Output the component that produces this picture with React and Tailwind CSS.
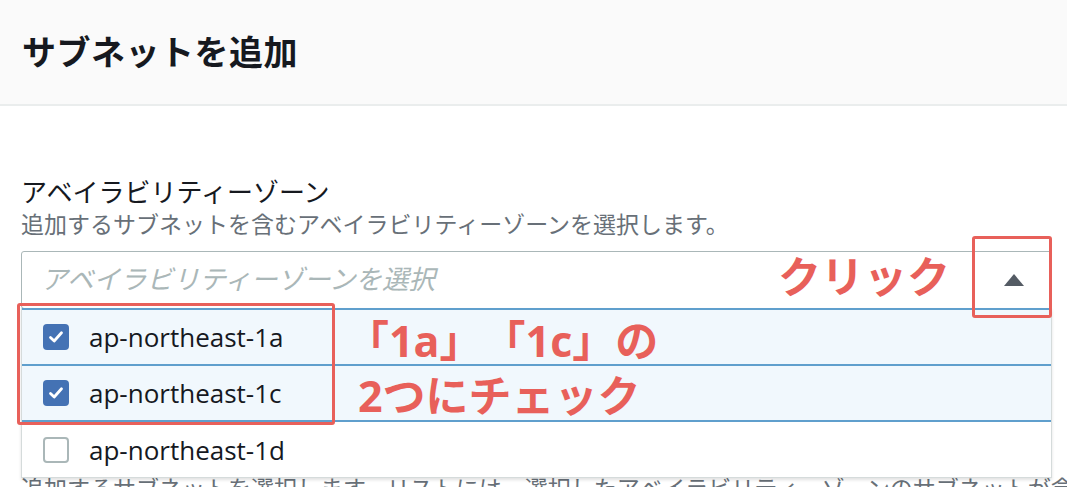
import React from "react";

const zones = [
  { name: "ap-northeast-1a", checked: true },
  { name: "ap-northeast-1c", checked: true },
  { name: "ap-northeast-1d", checked: false },
];

const font = {
  fontFamily: '"Open Sans", "Noto Sans CJK JP", sans-serif',
};

const CheckBox = ({ checked }) =>
  checked ? (
    <span className="flex h-[26px] w-[26px] items-center justify-center rounded-[4px] bg-[#4472b4]">
      <svg width="18" height="18" viewBox="0 0 18 18" fill="none">
        <path
          d="M3.5 9.5 L7.2 13 L14.5 4.8"
          stroke="#ffffff"
          strokeWidth="2.8"
          strokeLinecap="round"
          strokeLinejoin="round"
        />
      </svg>
    </span>
  ) : (
    <span className="h-[26px] w-[26px] rounded-[4px] border-2 border-[#aab7b8] bg-white" />
  );

const App = () => {
  return (
    <div
      className="relative h-[487px] w-[1067px] overflow-hidden bg-white text-[#16191f] [text-spacing-trim:space-all]"
      style={font}
    >
      <div className="flex h-[106px] items-center border-b-2 border-[#eaeded] bg-[#fafafa] pl-[22px]">
        <h1 className="text-[34px] font-bold leading-none tracking-[0.5px]">
          サブネットを追加
        </h1>
      </div>

      <div className="pl-[21px] pr-[15px] pt-[69px]">
        <div className="text-[26px] leading-[34px]">アベイラビリティーゾーン</div>
        <div className="text-[23px] leading-[30px] text-[#687078]">
          追加するサブネットを含むアベイラビリティーゾーンを選択します。
        </div>

        <div className="relative mt-[12px]">
          <div className="flex h-[58px] items-center justify-between rounded-[3px] border border-[#aab7b8] pl-[19px] pr-[26px]">
            <span className="text-[26.5px] italic text-[#aab7b8]">
              アベイラビリティーゾーンを選択
            </span>
            <svg width="22" height="14" viewBox="0 0 22 14">
              <path d="M11 1 L21 13 L1 13 Z" fill="#545b64" />
            </svg>
          </div>

          <ul className="absolute left-0 right-0 top-[57px] z-10 border-x border-b border-[#d5dbdb] bg-white shadow-[0_2px_3px_rgba(0,0,0,0.12)]">
            {zones.map((z) => (
              <li
                key={z.name}
                className={
                  z.checked
                    ? "-mt-[2px] flex h-[58px] items-center gap-[20px] border-y-2 border-[#5f9fcd] bg-[#f1f8fd] pl-[21px] first:mt-0"
                    : "flex h-[55px] items-center gap-[20px] pl-[21px]"
                }
              >
                <CheckBox checked={z.checked} />
                <span className="text-[26px] leading-none">{z.name}</span>
              </li>
            ))}
          </ul>
        </div>

        <div className="mt-[164px] whitespace-nowrap text-[23px] leading-[30px] text-[#687078]">
          追加するサブネットを選択します。リストには、選択したアベイラビリティーゾーンのサブネットが含まれます。
        </div>
      </div>

      {/* annotations */}
      <div className="absolute left-[972px] top-[236px] z-20 h-[82px] w-[80px] rounded-[3px] border-[3px] border-[#e8605a]" />
      <div className="absolute left-[17px] top-[303px] z-20 h-[122px] w-[318px] rounded-[3px] border-[3px] border-[#e8605a]" />
      <div className="absolute left-[778px] top-[252px] z-20 text-[43px] font-bold leading-[50px] text-[#e8605a]">
        クリック
      </div>
      <div className="absolute left-[346px] top-[313px] z-20 text-[43px] font-bold leading-[55px] text-[#e8605a]">
        <div>「1a」「1c」の</div>
        <div className="pl-[12px]">2つにチェック</div>
      </div>
    </div>
  );
};

export default App;
